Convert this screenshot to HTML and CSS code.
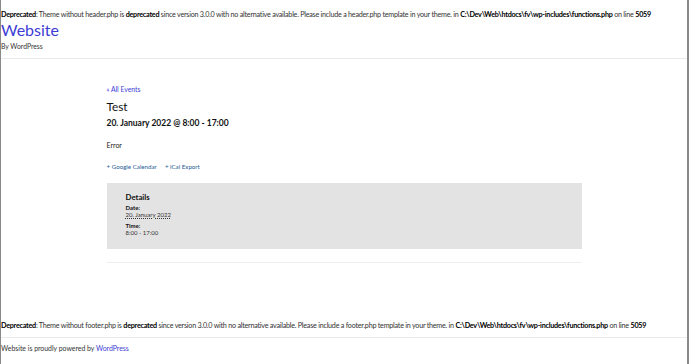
FILE: index.html
```html
<!DOCTYPE html>
<html lang="en">
<head>
    <meta charset="UTF-8">
    <meta name="viewport" content="width=device-width, initial-scale=1.0">
    <title>Test &ndash; Website</title>
    <link rel="stylesheet" href="styles.css">
</head>
<body>
    <div class="page">
        <p class="notice"><b>Deprecated</b>: Theme without header.php is <b>deprecated</b> since version 3.0.0 with no alternative available. Please include a header.php template in your theme. in <b>C:\Dev\Web\htdocs\fv\wp-includes\functions.php</b> on line <b>5059</b></p>

        <header class="site-header">
            <a class="site-title" href="#">Website</a>
            <p class="site-description">By WordPress</p>
        </header>

        <main class="event">
            <a class="back-link" href="#">&laquo; All Events</a>
            <h1 class="event-title">Test</h1>
            <h2 class="event-date">20. January 2022 @ 8:00 - 17:00</h2>
            <p class="event-body">Error</p>

            <div class="export-links">
                <a href="#">+ Google Calendar</a>
                <a href="#">+ iCal Export</a>
            </div>

            <div class="meta-box">
                <h3>Details</h3>
                <dl>
                    <dt>Date:</dt>
                    <dd><abbr>20. January 2022</abbr></dd>
                    <dt>Time:</dt>
                    <dd>8:00 - 17:00</dd>
                </dl>
            </div>
        </main>

        <p class="notice footer-notice"><b>Deprecated</b>: Theme without footer.php is <b>deprecated</b> since version 3.0.0 with no alternative available. Please include a footer.php template in your theme. in <b>C:\Dev\Web\htdocs\fv\wp-includes\functions.php</b> on line <b>5059</b></p>

        <footer class="site-footer">
            Website is proudly powered by <a href="#">WordPress</a>
        </footer>
    </div>
</body>
</html>
```

FILE: styles.css
```css
html, body {
    margin: 0;
    padding: 0;
    background: #fff;
}
body {
    font-family: Lato, 'Noto Sans', sans-serif;
    color: #222;
}
.page {
    height: 364px;
    box-sizing: border-box;
    border-left: 1px solid #8a8a8a;
    border-right: 2px solid #8a8a8a;
    overflow: hidden;
}
a {
    text-decoration: none;
}
.notice {
    margin: 0;
    padding: 10px 0 0 0;
    font-size: 7.2px;
    line-height: 10px;
    letter-spacing: -0.245px;
    color: #333;
    white-space: nowrap;
}
.notice b {
    color: #000;
}
.site-header {
    padding-bottom: 6px;
    border-bottom: 1px solid #eaeaea;
}
.site-title {
    display: block;
    font-size: 16px;
    line-height: 20px;
    color: #3d3dd6;
}
.site-description {
    margin: 0;
    font-size: 6.8px;
    line-height: 12px;
    color: #333;
}
.event {
    width: 475px;
    margin: 0 auto;
    padding-top: 25px;
    padding-bottom: 13px;
    border-bottom: 1px solid #eee;
}
.back-link {
    display: block;
    font-size: 6.8px;
    line-height: 10px;
    color: #3d3dd6;
}
.event-title {
    margin: 5px 0 0;
    font-size: 11.8px;
    font-weight: 400;
    line-height: 16px;
    color: #111;
}
.event-date {
    margin: 2px 0 0;
    font-size: 8.5px;
    line-height: 12px;
    color: #111;
}
.event-body {
    margin: 11px 0 0;
    font-size: 7px;
    line-height: 10px;
}
.export-links {
    margin-top: 12px;
    font-size: 6.2px;
    line-height: 10px;
    display: flex;
    gap: 8px;
}
.export-links a {
    color: #1e5b96;
}
.meta-box {
    margin-top: 11px;
    height: 66px;
    box-sizing: border-box;
    background: #e3e3e3;
    padding: 9px 19px;
}
.meta-box h3 {
    margin: 0;
    font-size: 7.8px;
    line-height: 10px;
    color: #111;
}
.meta-box dl {
    margin: 2px 0 0;
    font-size: 6px;
    line-height: 7px;
}
.meta-box dt {
    font-weight: 700;
    color: #111;
}
.meta-box dd {
    margin: 0 0 4px;
    color: #333;
}
.meta-box abbr {
    text-decoration: underline dotted;
}
.footer-notice {
    padding-top: 58px;
    padding-bottom: 6px;
    border-bottom: 1px solid #eaeaea;
}
.site-footer {
    padding-top: 5px;
    font-size: 6.9px;
    line-height: 10px;
    color: #333;
}
.site-footer a {
    color: #3d3dd6;
}
```
